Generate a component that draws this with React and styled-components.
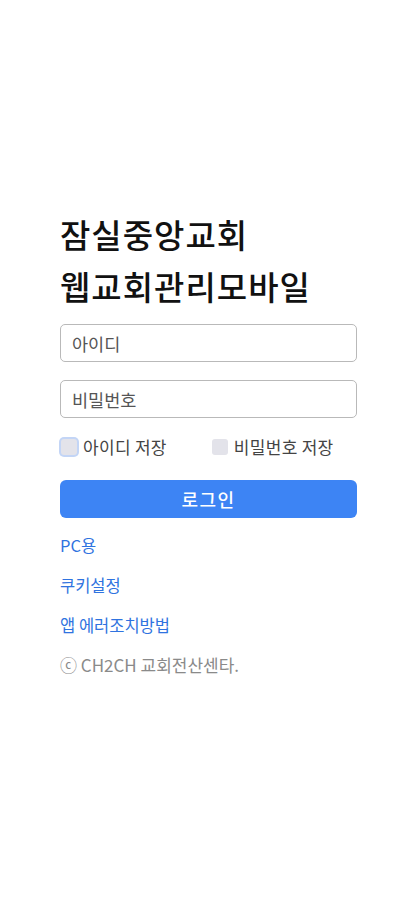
import React from 'react';
import styled, { createGlobalStyle } from 'styled-components';

const GlobalStyle = createGlobalStyle`
  html, body {
    margin: 0;
    padding: 0;
    background: #fff;
  }
  body {
    font-family: "Noto Sans CJK KR", "Noto Sans", sans-serif;
  }
`;

const Page = styled.div`
  width: 417px;
  min-height: 900px;
  box-sizing: border-box;
  padding: 208px 60px 0;
`;

const Title = styled.h1`
  margin: 0;
  font-size: 33px;
  font-weight: 500;
  line-height: 52px;
  color: #111;
  letter-spacing: 1px;
`;

const Form = styled.form`
  display: flex;
  flex-direction: column;
  margin-top: 12px;
`;

const Input = styled.input`
  box-sizing: border-box;
  width: 100%;
  height: 38px;
  padding: 0 11px;
  border: 1px solid #b9b9b9;
  border-radius: 5px;
  font-family: inherit;
  font-size: 17.5px;
  color: #333;
  outline: none;
  margin-bottom: 18px;

  &::placeholder {
    color: #555;
  }
`;

const CheckRow = styled.div`
  display: flex;
  align-items: center;
  gap: 45px;
`;

const CheckLabel = styled.label`
  display: flex;
  align-items: center;
  gap: 6px;
  font-size: 17px;
  line-height: 22px;
  color: #444;
  letter-spacing: 0.3px;
`;

const Box = styled.span`
  display: inline-block;
  width: 16px;
  height: 16px;
  border-radius: 3px;
  background: #e3e3ea;
  box-shadow: ${(p) => (p.focused ? '0 0 0 2px #c3d5f6' : 'none')};
  margin-left: ${(p) => (p.focused ? '1px' : '0')};
`;

const Button = styled.button`
  margin-top: 22px;
  height: 38px;
  width: 100%;
  border: none;
  border-radius: 6px;
  background: #3d84f4;
  color: #fff;
  font-family: inherit;
  font-size: 18px;
  font-weight: 500;
  letter-spacing: 1.5px;
`;

const Links = styled.div`
  display: flex;
  flex-direction: column;
  gap: 18px;
  margin-top: 16px;
`;

const LinkText = styled.a`
  font-size: ${(p) => (p.muted ? '17px' : '16.5px')};
  line-height: 22px;
  color: ${(p) => (p.muted ? '#8a8a8a' : '#2f73e0')};
  text-decoration: none;
`;

export default function App() {
  return (
    <>
      <GlobalStyle />
      <Page>
        <Title>
          잠실중앙교회
          <br />
          웹교회관리모바일
        </Title>
        <Form onSubmit={(e) => e.preventDefault()}>
          <Input placeholder="아이디" />
          <Input placeholder="비밀번호" type="password" />
          <CheckRow>
            <CheckLabel>
              <Box focused />
              아이디 저장
            </CheckLabel>
            <CheckLabel>
              <Box />
              비밀번호 저장
            </CheckLabel>
          </CheckRow>
          <Button type="submit">로그인</Button>
        </Form>
        <Links>
          <LinkText href="#">PC용</LinkText>
          <LinkText href="#">쿠키설정</LinkText>
          <LinkText href="#">앱 에러조치방법</LinkText>
          <LinkText as="span" muted>
            ⓒ CH2CH 교회전산센타.
          </LinkText>
        </Links>
      </Page>
    </>
  );
}
